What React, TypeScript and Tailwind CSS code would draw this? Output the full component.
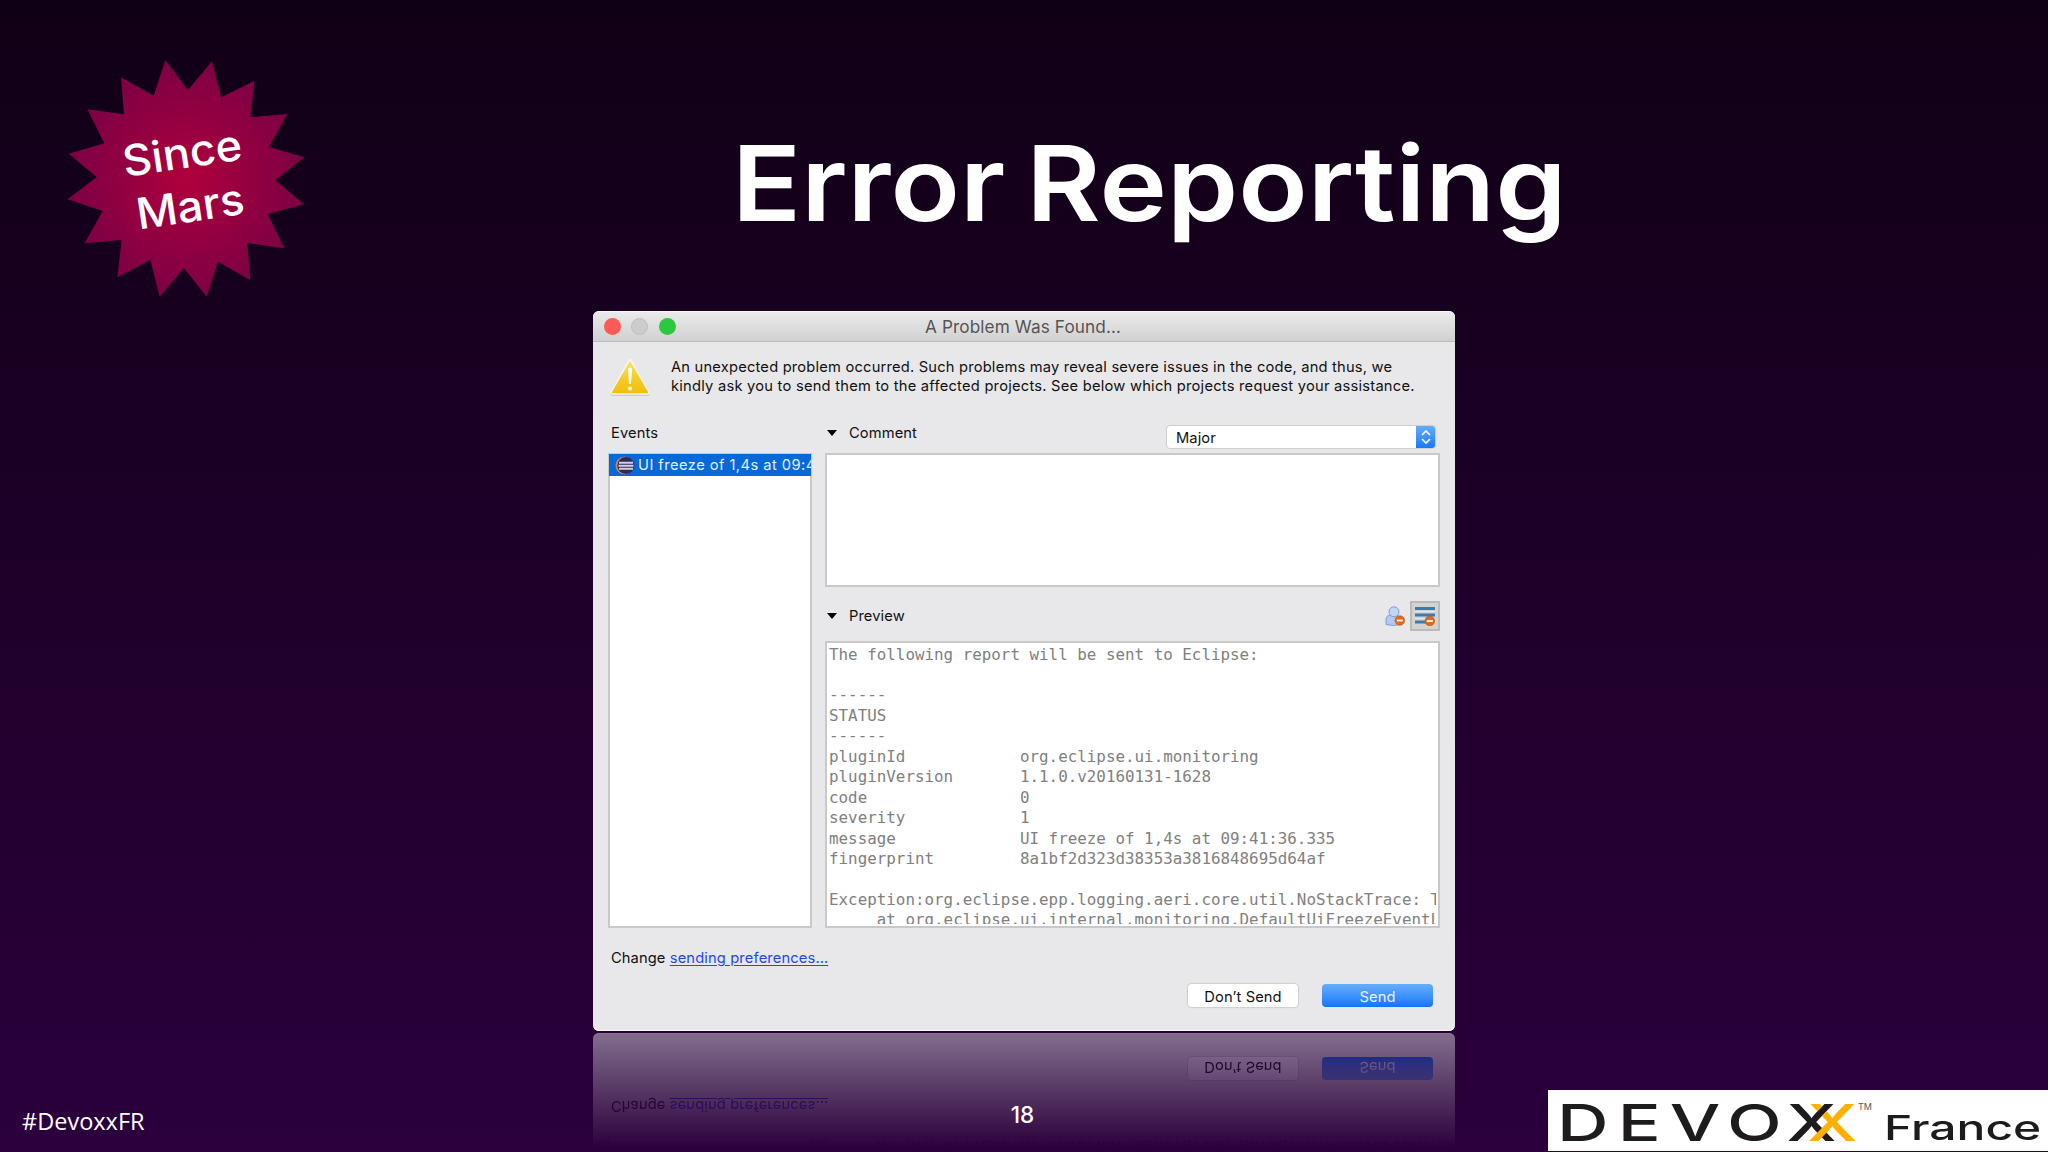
import React from 'react';
import clsx from 'clsx';

const REPORT = `The following report will be sent to Eclipse:

------
STATUS
------
pluginId            org.eclipse.ui.monitoring
pluginVersion       1.1.0.v20160131-1628
code                0
severity            1
message             UI freeze of 1,4s at 09:41:36.335
fingerprint         8a1bf2d323d38353a3816848695d64af

Exception:org.eclipse.epp.logging.aeri.core.util.NoStackTrace: The
     at org.eclipse.ui.internal.monitoring.DefaultUiFreezeEventLogger`;

const WarningIcon = () => (
  <svg viewBox="0 0 44 40" className="w-[44px] h-[40px] shrink-0">
    <defs>
      <linearGradient id="warn" x1="0" y1="0" x2="0" y2="1">
        <stop offset="0" stopColor="#fbe36a" />
        <stop offset="0.5" stopColor="#f3cd2c" />
        <stop offset="1" stopColor="#f2bf0c" />
      </linearGradient>
    </defs>
    <path d="M22 4.5 L40 37 H4 Z" fill="#c4c3c0" stroke="#c4c3c0" strokeWidth="3.5" strokeLinejoin="round" />
    <path d="M22 3.5 L40 36 H4 Z" fill="#f6f5ee" stroke="#f6f5ee" strokeWidth="3.5" strokeLinejoin="round" />
    <path d="M22 5 L39.5 35.5 H4.5 Z" fill="url(#warn)" stroke="url(#warn)" strokeWidth="1.500" strokeLinejoin="round" />
    <path d="M20 12.500 a2 2 0 0 1 4 0 L23 27 h-2 Z" fill="#fffdf2" />
    <circle cx="22" cy="31.500" r="2" fill="#fffdf2" />
  </svg>
);

const EclipseIcon = () => (
  <svg viewBox="0 0 20 20" className="w-5 h-5 shrink-0">
    <circle cx="9.500" cy="10.500" r="9" fill="#c98a55" />
    <circle cx="10.800" cy="10.500" r="8.500" fill="#33285a" />
    <path d="M4 7.700 H18 M3.500 10.700 H18.500 M4 13.700 H18" stroke="#d3d0e6" strokeWidth="1.900" />
  </svg>
);

const RemoveMark = ({ x, y }: { x: number; y: number }) => (
  <g>
    <circle cx={x} cy={y} r="4.800" fill="#e06a1c" stroke="#c0500f" strokeWidth="0.600" />
    <path d={`M${x - 3} ${y} h6`} stroke="#fff" strokeWidth="1.800" />
  </g>
);

const AnonymizeIcon = () => (
  <svg viewBox="0 0 20 20" className="w-5 h-5">
    <path d="M1 18.500 V14 Q1 9.500 5 9.300 H12 Q15 10 15 14 V18.500 Q8 20.500 1 18.500 Z" fill="#b3c9f2" stroke="#7f9fd6" />
    <circle cx="9" cy="5.800" r="5" fill="#c3d4f5" stroke="#7f9fd6" />
    <RemoveMark x={14.800} y={14.500} />
  </svg>
);

const MessagesIcon = () => (
  <svg viewBox="0 0 20 20" className="w-5 h-5">
    <path d="M0 2.500 H20 M0 9 H20 M0 16 H12" stroke="#3f79ac" strokeWidth="3" />
    <path d="M0 5.500 H20 M0 12.500 H20" stroke="#dfe6e6" strokeWidth="1.200" />
    <RemoveMark x={14.800} y={15} />
  </svg>
);

const SectionTitle = ({ children }: { children: React.ReactNode }) => (
  <div className="flex items-center self-start leading-5">
    <svg viewBox="0 0 10 6" className="w-[10px] h-[6px] mr-3">
      <path d="M0 0 H10 L5 6 Z" fill="#000" />
    </svg>
    {children}
  </div>
);

const ProblemDialog = ({ className }: { className?: string }) => (
  <div
    className={clsx(
      "w-[862px] h-[720px] rounded-[6px] overflow-hidden bg-[#e8e7e9] text-[#111] font-['Inter',sans-serif] text-[14.700px] tracking-[0.100px] shadow-[inset_0_-1px_0_#fff]",
      className
    )}
  >
    <div className="h-[31px] px-[10.500px] grid grid-cols-[1fr_auto_1fr] items-center border-t border-t-[#f8f8f8] border-b border-b-[#bdbcbd] bg-linear-to-b from-[#ebeaeb] to-[#d2d1d2]">
      <div className="flex gap-[10.500px]">
        <span className="size-[17px] rounded-full bg-[#fc5b57]" />
        <span className="size-[17px] rounded-full bg-[#cdcccc] border border-[#bfbebe]" />
        <span className="size-[17px] rounded-full bg-[#2bc840]" />
      </div>
      <span className="pt-px pr-[2px] text-[17.200px] leading-5 tracking-[0.100px] text-[#555]">A Problem Was Found…</span>
      <span />
    </div>

    <div className="flex h-[78px] pt-[15px] pl-[15px]">
      <WarningIcon />
      <p className="ml-[19px] pt-[0.500px] leading-[19.400px] tracking-[0.235px] whitespace-nowrap">
        <span className="tracking-[0.200px]">
          An unexpected problem occurred. Such problems may reveal severe issues in the code, and thus, we
        </span>
        <br />
        kindly ask you to send them to the affected projects. See below which projects request your assistance.
      </p>
    </div>

    <div className="grid grid-cols-[204px_615px] gap-x-[13px] pl-[15px]">
      <div>
        <div className="h-[33px] pt-[3px] pl-[3px] leading-5">Events</div>
        <div className="h-[475px] border-2 border-[#c9c8ca] bg-white">
          <div className="flex items-center h-[22px] -mt-px -mx-px pl-[6px] gap-[3px] bg-[#0768d8] text-[#e8f1ff] overflow-hidden whitespace-nowrap tracking-[0.450px]">
            <EclipseIcon />
            <span className="pt-px">UI freeze of 1,4s at 09:41:36.335</span>
          </div>
        </div>
      </div>

      <div>
        <div className="h-[33px] flex justify-between pt-[3px] pl-[2px]">
          <SectionTitle>Comment</SectionTitle>
          <div className="flex w-[270px] h-6 mt-[2px] mr-[4px] rounded-[4px] bg-white border border-[#cfced0] overflow-hidden">
            <span className="flex-1 pl-[9px] leading-[24px]">Major</span>
            <span className="w-5 -my-px -mr-px bg-linear-to-b from-[#65aefb] to-[#0f76fb] flex items-center justify-center">
              <svg viewBox="0 0 10 14" className="w-[10px] h-[14px]">
                <path d="M1 5 L5 1 L9 5 M1 9 L5 13 L9 9" fill="none" stroke="#fff" strokeWidth="1.700" />
              </svg>
            </span>
          </div>
        </div>
        <div className="h-[134px] border-2 border-[#c9c8ca] bg-white" />
        <div className="h-[53.500px] flex items-start justify-between pt-[14px] pl-[2px]">
          <div className="pt-[5px]">
            <SectionTitle>Preview</SectionTitle>
          </div>
          <div className="flex items-center gap-[5px]">
            <AnonymizeIcon />
            <span className="size-[30px] flex items-center justify-center bg-[#d3d4d0] border-2 border-[#babbb8]">
              <MessagesIcon />
            </span>
          </div>
        </div>
        <div className="h-[287.500px] border-2 border-[#c9c8ca] bg-white pr-[2px] pb-[2px]">
          <pre className="h-full overflow-hidden pl-[2px] pt-[2px] font-['DejaVu_Sans_Mono',monospace] text-[15.870px] leading-[20.450px] tracking-[0px] text-[#808080]">
            {REPORT}
          </pre>
        </div>
      </div>
    </div>

    <div className="pl-[18px] pt-[20px] leading-5">
      Change <span className="text-[#2547ef] underline underline-offset-[2px] tracking-[0.140px]">sending preferences…</span>
    </div>
    <div className="flex justify-end gap-6 pt-[16px] pr-[22px] text-center leading-[26px]">
      <span className="w-[110px] h-[23px] rounded-[4px] bg-white shadow-[0_0_1px_1px_#cfced0]">Don’t Send</span>
      <span className="w-[111px] h-[23px] rounded-[4px] bg-linear-to-b from-[#66aefb] to-[#0c75fb] text-[#eaf4ff]">
        Send
      </span>
    </div>
  </div>
);

const SinceBadge = () => (
  <div className="relative w-[300px] h-[280px] text-white font-['Inter',sans-serif] font-medium">
    <svg viewBox="0 0 900 840" className="w-full h-full">
      <defs>
        <radialGradient id="burst" gradientUnits="userSpaceOnUse" cx="440" cy="415" r="340">
          <stop offset="0" stopColor="#b0003c" />
          <stop offset="0.500" stopColor="#960040" />
          <stop offset="1" stopColor="#7f0045" />
        </radialGradient>
      </defs>
      <polygon
        fill="url(#burst)"
        points="376,60 444,150 516,64 544,172 644,122 631,232 742,222 687,321 793,352 706,421 792,493 683,522 733,625 622,609 631,720 534,665 500,770 432,684 359,770 331,660 232,712 245,600 134,610 188,513 83,478 170,411 86,341 193,310 142,208 252,223 243,112 341,167"
      />
    </svg>
    <div className="absolute left-[66px] top-[85px] w-[160px] -rotate-[8.500deg] scale-x-[1.050] text-center text-[43px] leading-[54px]">
      Since
      <br />
      Mars
    </div>
  </div>
);

const DevoxxLogo = () => (
  <div className="flex w-[500px] h-[61px] bg-white text-[#1d1b1c] font-['Inter',sans-serif] whitespace-nowrap overflow-hidden">
    <div className="w-[310px] pl-[9px]">
      <div className="flex w-max origin-left scale-x-[1.400] text-[51px] leading-[65px] font-medium">
        <span className="tracking-[6.500px]">DEVO</span>
        <span className="-ml-[3px]">X</span>
        <span className="text-[#ffb000] -ml-[21px] [clip-path:polygon(0_0,22px_0,0_32px,0_41px,29px_0,60px_0,60px_65px,0_65px)]">
          X
        </span>
      </div>
    </div>
    <span className="w-[26px] pt-[11px] text-[9px] leading-[12px] text-[#555]">TM</span>
    <span className="origin-left scale-x-[1.410] text-[34px] leading-[76px] font-medium">France</span>
  </div>
);

const App: React.FC = () => {
  return (
    <div className="relative w-[2048px] h-[1152px] overflow-hidden bg-linear-to-b from-[#100015] via-[#1e0029] to-[#2b003d]">
      <header className="flex h-[311px] pl-10 pt-10">
        <SinceBadge />
        <h1 className="ml-[392px] mt-[80px] h-[126px] origin-left scale-x-[1.098] text-[104px] leading-[126px] font-[570] [word-spacing:-7px] text-white font-['Inter',sans-serif] whitespace-nowrap">
          Error Reporting
        </h1>
      </header>

      <main className="flex flex-col items-center">
        <ProblemDialog />
        <div
          aria-hidden
          className="mt-[2px] h-[119px] overflow-hidden opacity-45 [mask-image:linear-gradient(to_bottom,#000_5%,transparent_97%)]"
        >
          <ProblemDialog className="-scale-y-100" />
        </div>
      </main>

      <footer className="absolute inset-x-0 bottom-px h-[62px] flex items-end justify-between text-white">
        <span className="w-[500px] pl-[22px] pb-[15px] text-[23.500px] leading-[30px] font-['Open_Sans',sans-serif]">#DevoxxFR</span>
        <span className="pb-[22px] pr-[3px] text-[22.500px] leading-[28px] font-medium font-['Inter',sans-serif]">18</span>
        <DevoxxLogo />
      </footer>
    </div>
  );
};

export default App;
